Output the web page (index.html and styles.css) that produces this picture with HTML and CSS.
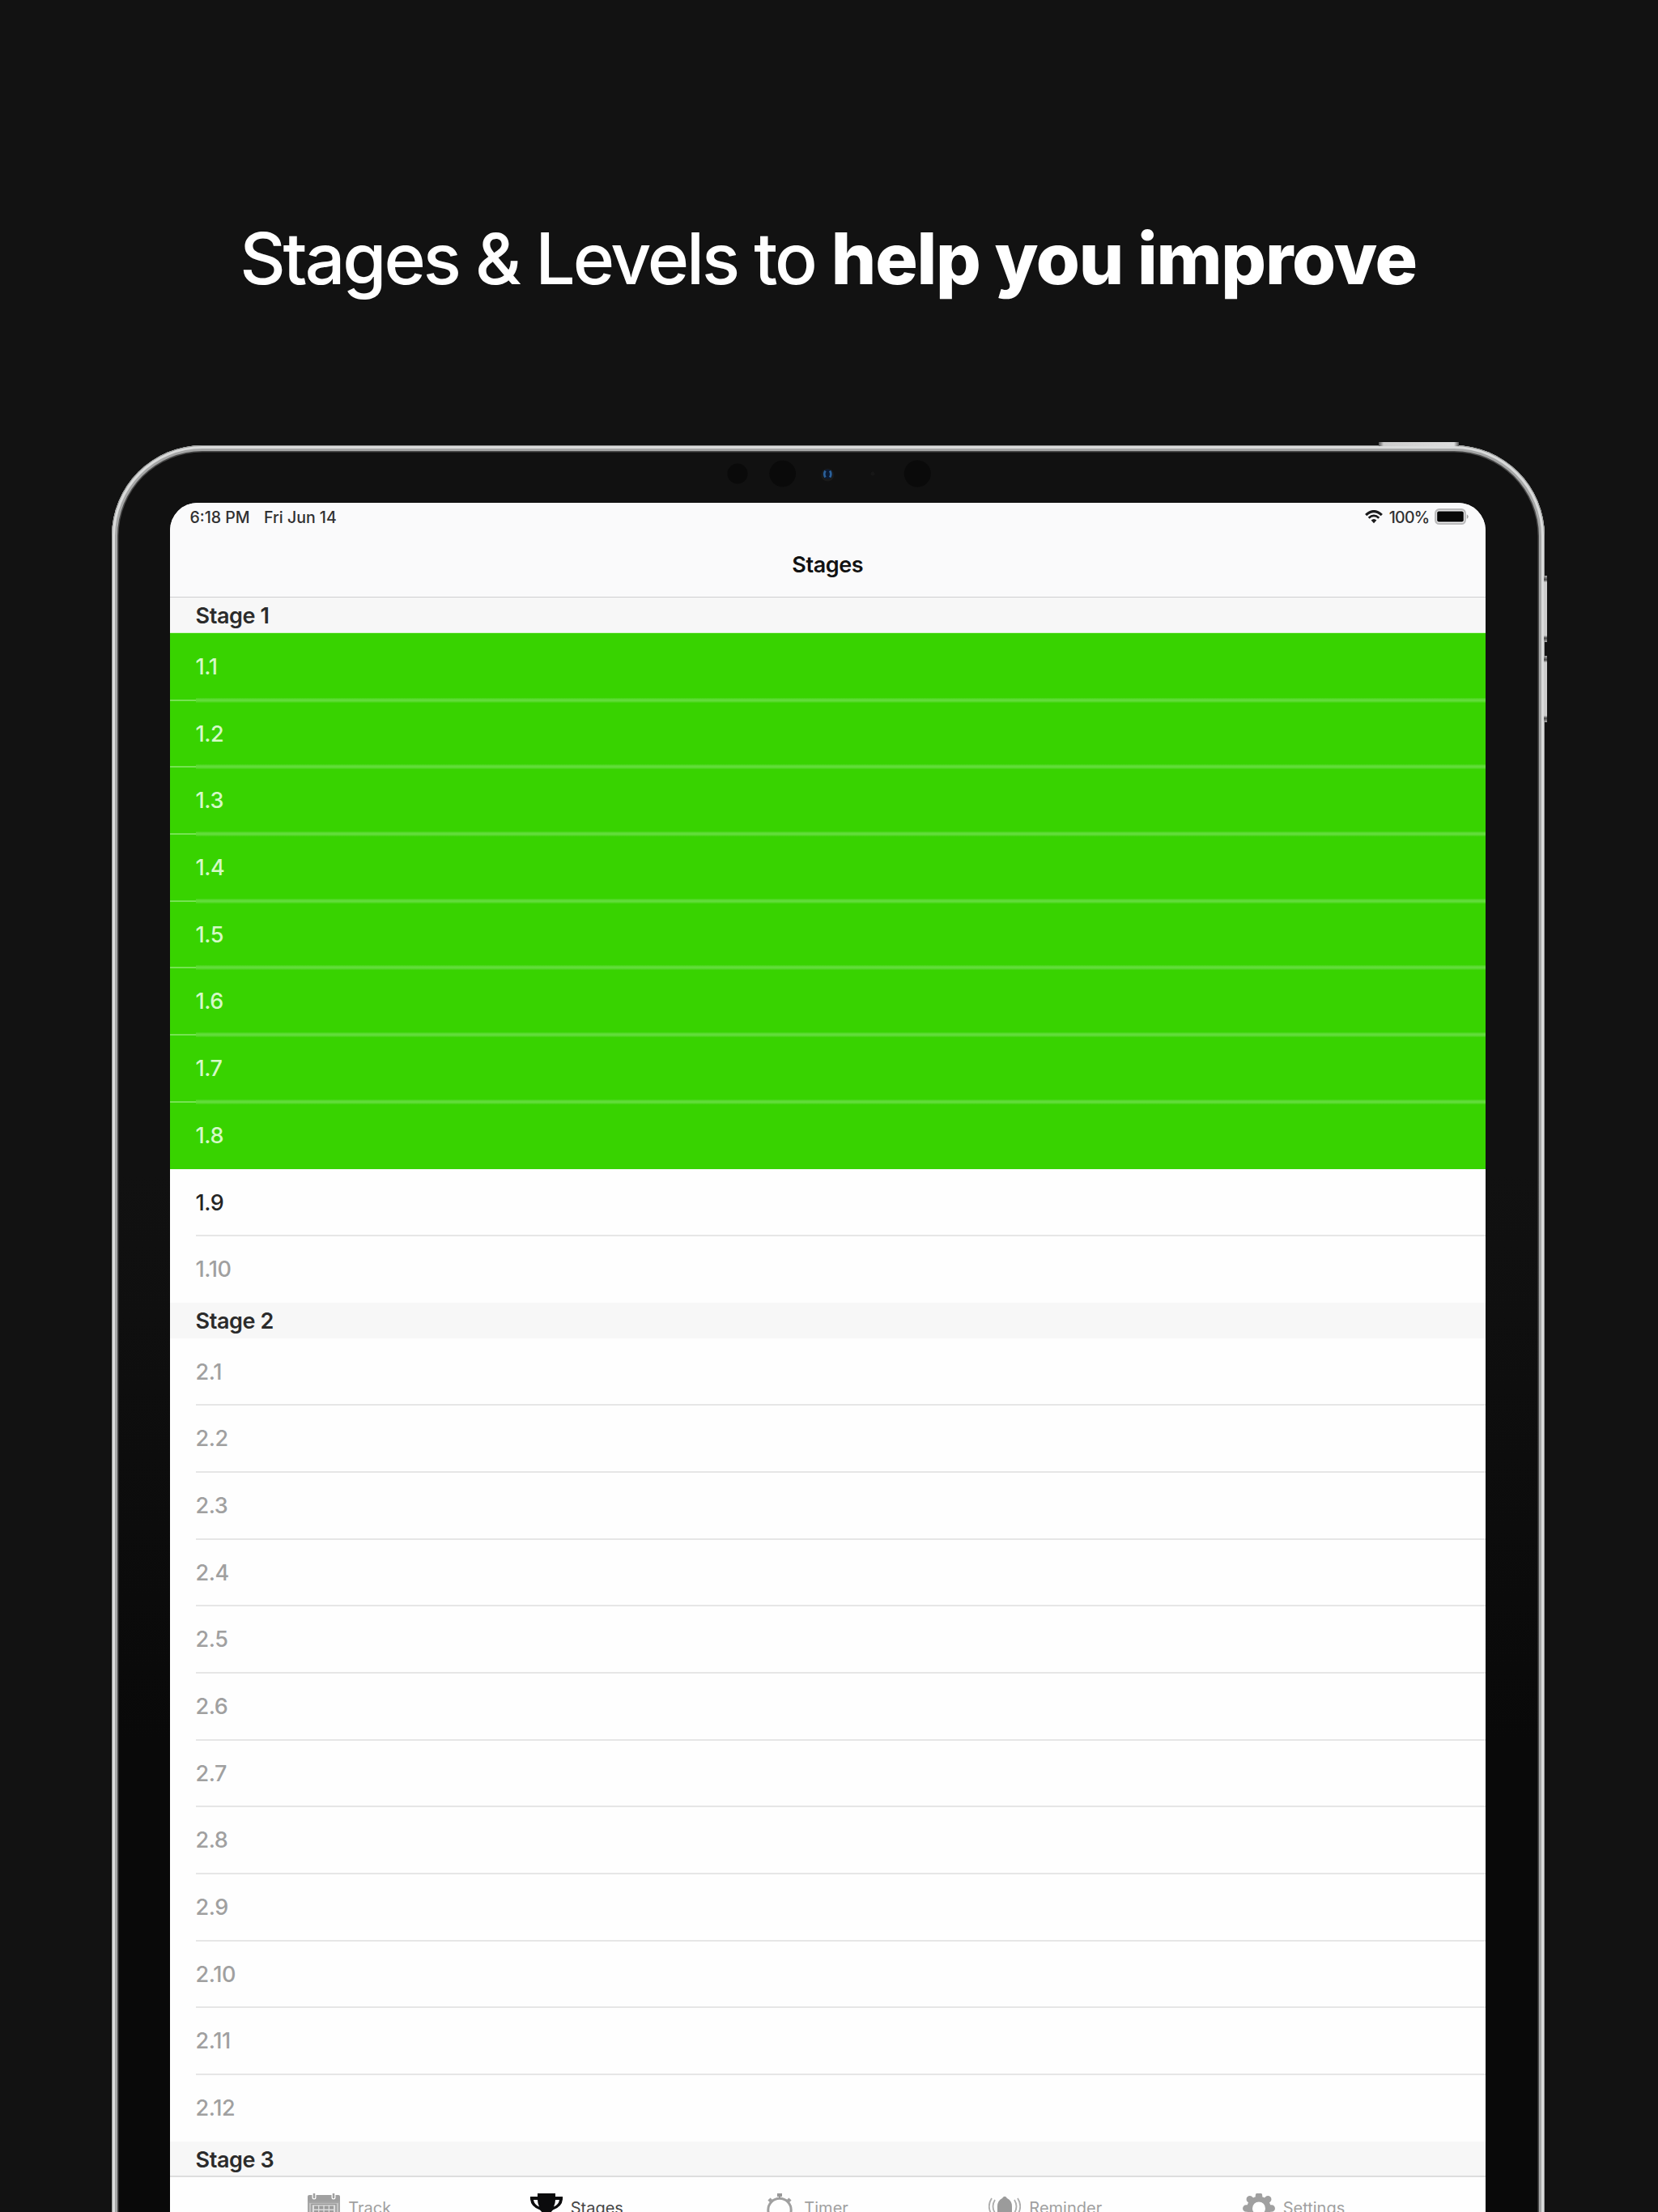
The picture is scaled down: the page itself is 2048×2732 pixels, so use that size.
FILE: index.html
```html
<!DOCTYPE html>
<html lang="en">
<head>
<meta charset="utf-8">
<title>Stages</title>
<link rel="stylesheet" href="styles.css">
</head>
<body>
<main class="poster">
  <h1 class="headline"><span class="headline-light">Stages &amp; Levels to</span><strong class="headline-bold">help you improve</strong></h1>

  <div class="tablet">
    <i class="button power"></i>
    <i class="button volume-up"></i>
    <i class="button volume-down"></i>
    <div class="frame">
      <svg class="sensors" width="260" height="40" viewBox="0 0 260 40">
        <circle cx="16" cy="20" r="12.5" fill="#0a0a0a"/>
        <circle cx="71.7" cy="20" r="16.3" fill="#0a0a0a"/>
        <circle cx="127.3" cy="21.5" r="8" fill="#1a1a1a"/>
        <circle cx="127.3" cy="20.5" r="6" fill="#0b1a33"/>
        <path d="M124.500 16.500q-2.500 4 0 8M130.100 16.500q2.500 4 0 8" fill="none" stroke="#2c6199" stroke-width="2.600"/>
        <circle cx="183" cy="20" r="2.500" fill="#171717"/>
        <circle cx="238.300" cy="20" r="16.500" fill="#0a0a0a"/>
      </svg>
      <div class="screen">
        <header class="top">
          <div class="status">
            <span class="time">6:18 PM</span><span class="date">Fri Jun 14</span>
            <svg class="wifi" width="22" height="17" viewBox="0 0 22 17">
              <path d="M1.200 6.200Q11-3 20.800 6.200" fill="none" stroke="#1b1b1c" stroke-width="3.200"/>
              <path d="M4.700 9.700Q11 4 17.300 9.700" fill="none" stroke="#1b1b1c" stroke-width="2.800"/>
              <path d="M7.600 12.600Q11 9.300 14.400 12.600L11 16.200Z" fill="#1b1b1c"/>
            </svg>
            <span class="percent">100%</span>
            <svg class="battery" width="43" height="21" viewBox="0 0 43 21">
              <rect x="1.200" y="1.200" width="36.600" height="17.800" rx="4.500" fill="#f1f1f2" stroke="#b9b9ba" stroke-width="2.200"/>
              <rect x="3.200" y="3.600" width="32.600" height="13" rx="2" fill="#080808"/>
              <path d="M39.800 7.200q4 2.900 0 5.800z" fill="#a5a5a6"/>
            </svg>
          </div>
          <h2 class="title">Stages</h2>
        </header>
        <section>
          <h3 class="stage first">Stage 1</h3>
          <ul class="levels">
            <li class="done">1.1</li><li class="done">1.2</li><li class="done">1.3</li><li class="done">1.4</li>
            <li class="done">1.5</li><li class="done">1.6</li><li class="done">1.7</li><li class="done">1.8</li>
            <li class="current">1.9</li><li>1.10</li>
          </ul>
        </section>
        <section>
          <h3 class="stage">Stage 2</h3>
          <ul class="levels">
            <li>2.1</li><li>2.2</li><li>2.3</li><li>2.4</li><li>2.5</li><li>2.6</li>
            <li>2.7</li><li>2.8</li><li>2.9</li><li>2.10</li><li>2.11</li><li>2.12</li>
          </ul>
        </section>
        <section><h3 class="stage last">Stage 3</h3></section>
        <nav class="tabs">
          <a class="tab">
            <svg width="40" height="40" viewBox="0 0 40 40">
              <path d="M0 10V4q0-2 2-2h36q2 0 2 2v6z" fill="#a0a0a0"/>
              <path d="M8 0v5M32 0v5" stroke="#fff" stroke-width="5" stroke-linecap="round"/>
              <path d="M8 0v5M32 0v5" stroke="#a0a0a0" stroke-width="2.500" stroke-linecap="round"/>
              <path d="M1 11h38v28H1z" fill="#c4c4c4" stroke="#a6a6a6" stroke-width="2"/>
              <path d="M5 13.500h30v22H5z" fill="#ddd" stroke="#999" stroke-width="1.500"/>
              <path d="M8 17.500h24M8 23h24M8 28.500h24" stroke="#9b9b9b" stroke-width="4" stroke-dasharray="5 1.350"/>
            </svg>
            <span>Track</span>
          </a>
          <a class="tab active">
            <svg width="40" height="40" viewBox="0 0 40 40">
              <path d="M9 0h22v4h9q1 12-12 16.500-4 4-5 8V34h6v4H11v-4h6v-5.500q-1-4-5-8Q-1 16 0 4h9zM9 8H4q1 6 7 8.500Q9 12 9 8zm22 0q0 4-2 8.500Q35 14 36 8z" fill="#0b0b0c"/>
            </svg>
            <span>Stages</span>
          </a>
          <a class="tab timer">
            <svg width="32" height="40" viewBox="0 0 32 40">
              <circle cx="16" cy="20.500" r="14.200" fill="none" stroke="#a0a0a0" stroke-width="3"/>
              <path d="M13 0h6v4h-6zM15 3h2v4h-2z" fill="#999"/>
              <path d="M3 7l3 3M29 7l-3 3" stroke="#a0a0a0" stroke-width="4.500"/>
            </svg>
            <span>Timer</span>
          </a>
          <a class="tab">
            <svg width="40" height="40" viewBox="0 -3 40 40">
              <path d="M17 3q3-4.500 6 0 6 3 6 10v12l4 4H7l4-4V13q0-7 6-10z" fill="#9b9b9b"/>
              <path d="M4 3q-6.500 10 0 20M8 5q-5 8 0 16M36 3q6.500 10 0 20M32 5q5 8 0 16" fill="none" stroke="#adadad" stroke-width="1.800"/>
            </svg>
            <span>Reminder</span>
          </a>
          <a class="tab">
            <svg width="40" height="40" viewBox="-20 -18.500 40 40">
              <g stroke="#a0a0a0" stroke-width="8.500" stroke-linecap="round">
                <path d="M0-15.700V15.700M-15.700 0H15.700M-11.200-11.200 11.200 11.200M-11.200 11.200 11.200-11.200"/>
              </g>
              <circle r="14.800" fill="#a0a0a0"/><circle r="8" fill="#fff"/>
            </svg>
            <span>Settings</span>
          </a>
        </nav>
      </div>
    </div>
  </div>
</main>
</body>
</html>
```
FILE: styles.css
```css
* { box-sizing: border-box; }
body {
  margin: 0;
  background: #121212;
  font-family: Inter, "Liberation Sans", sans-serif;
}
h1, h2, h3, ul { margin: 0; padding: 0; font-weight: inherit; list-style: none; }

.poster {
  height: 2732px;
  overflow: hidden;
  background: #121212;
}
.headline {
  display: flex;
  justify-content: center;
  gap: 20px;
  height: 550px;
  padding: 264px 2px 0 0;
  color: #fff;
  font-size: 87.500px;
  line-height: 110px;
  white-space: nowrap;
}
.headline-light { font-weight: 550; letter-spacing: -3.100px; }
.headline-bold { font-weight: 820; letter-spacing: -1.250px; }

/* Tablet body */
.tablet {
  position: relative;
  width: 1770px;
  margin-left: 137.500px;
}
.frame {
  height: 2400px;
  padding: 71px 72.500px 0 72px;
  border-radius: 112px;
  background: linear-gradient(#111 0, #111 900px, #090909 1600px);
  box-shadow: inset 0 0 0 1px #989a99, inset 0 0 0 4px #dadbdb, inset 0 0 0 7px #a5a6a6, inset 0 0 0 8.500px #494949;
}
.sensors { position: absolute; left: 757.500px; top: 15px; }
.button { position: absolute; background: #cfd0d0; }
.power {
  left: 1565.500px; top: -4px; width: 99px; height: 5px;
  background: linear-gradient(90deg, #555, #ccc 6%, #ddd 94%, #555);
}
.volume-up, .volume-down {
  left: 1769px; width: 4.300px; height: 82px;
  background: linear-gradient(#aaa, #444 6%, #ccc 10%, #ccc 90%, #444 94%, #aaa);
}
.volume-up { top: 161px; }
.volume-down { top: 260px; }

/* Screen */
.screen {
  height: 2300px;
  overflow: hidden;
  border-radius: 34px 34px 0 0;
  background: #fefefe;
}
.top {
  height: 117px;
  border-bottom: 1.500px solid #cfcfd0;
  background: #fafafb;
}
.status {
  display: flex;
  align-items: center;
  height: 34px;
  padding: 1px 20.500px 0 25px;
  color: #303031;
  font-size: 19.500px;
  font-weight: 550;
}
.date { margin-left: 17.500px; }
.wifi { margin-left: auto; margin-right: 8px; }
.percent { margin-right: 6px; letter-spacing: -.7px; }
.title {
  padding-top: 26px;
  color: #111;
  font-size: 27px;
  font-weight: 600;
  letter-spacing: -.4px;
  line-height: 34px;
  text-align: center;
}
.stage {
  height: 43.700px;
  padding-left: 32px;
  background: #f7f7f7;
  color: #2b2b2b;
  font-size: 27px;
  font-weight: 600;
  letter-spacing: -.4px;
  line-height: 45px;
}
.first { height: 44px; border-bottom: 1.500px solid #d3f5c4; }
.last { height: 42.300px; }
.levels li {
  position: relative;
  height: 82.700px;
  padding-left: 32px;
  color: #a0a0a0;
  font-size: 27px;
  font-weight: 450;
  letter-spacing: -.4px;
  line-height: 83px;
}
.levels li:not(:last-child)::after {
  content: "";
  position: absolute;
  z-index: 1;
  left: 32px; right: 0; bottom: -1px;
  height: 2px;
  background: #e6e6e6;
}
.levels .done { background: #38d300; color: #d5f9c7; }
.levels .done:not(:last-child)::after {
  bottom: -3px;
  height: 6px;
  background: linear-gradient(#43d512, #62dc3b 35%, #62dc3b 60%, #3fd40b);
}
.levels .done:not(:last-child)::before {
  content: "";
  position: absolute;
  z-index: 1;
  left: 0; bottom: -1px;
  width: 32px; height: 2px;
  background: #76e353;
}
.levels .done:nth-child(8)::before, .levels .done:nth-child(8)::after { display: none; }
.levels .current { color: #242424; }

/* Tab bar */
.tabs {
  display: flex;
  justify-content: center;
  gap: 173.500px;
  height: 120px;
  padding-top: 20px;
  border-top: 2px solid #dedede;
}
.tab {
  display: flex;
  gap: 10px;
  height: 40px;
  color: #a0a0a0;
  font-size: 20px;
}
.tab:first-child { margin-left: -3px; }
.tab.active { margin: 0 4px 0 -2px; }
.timer { gap: 14px; }
.tab span { padding-top: 5px; line-height: 26px; }
.active { color: #454546; }
```
